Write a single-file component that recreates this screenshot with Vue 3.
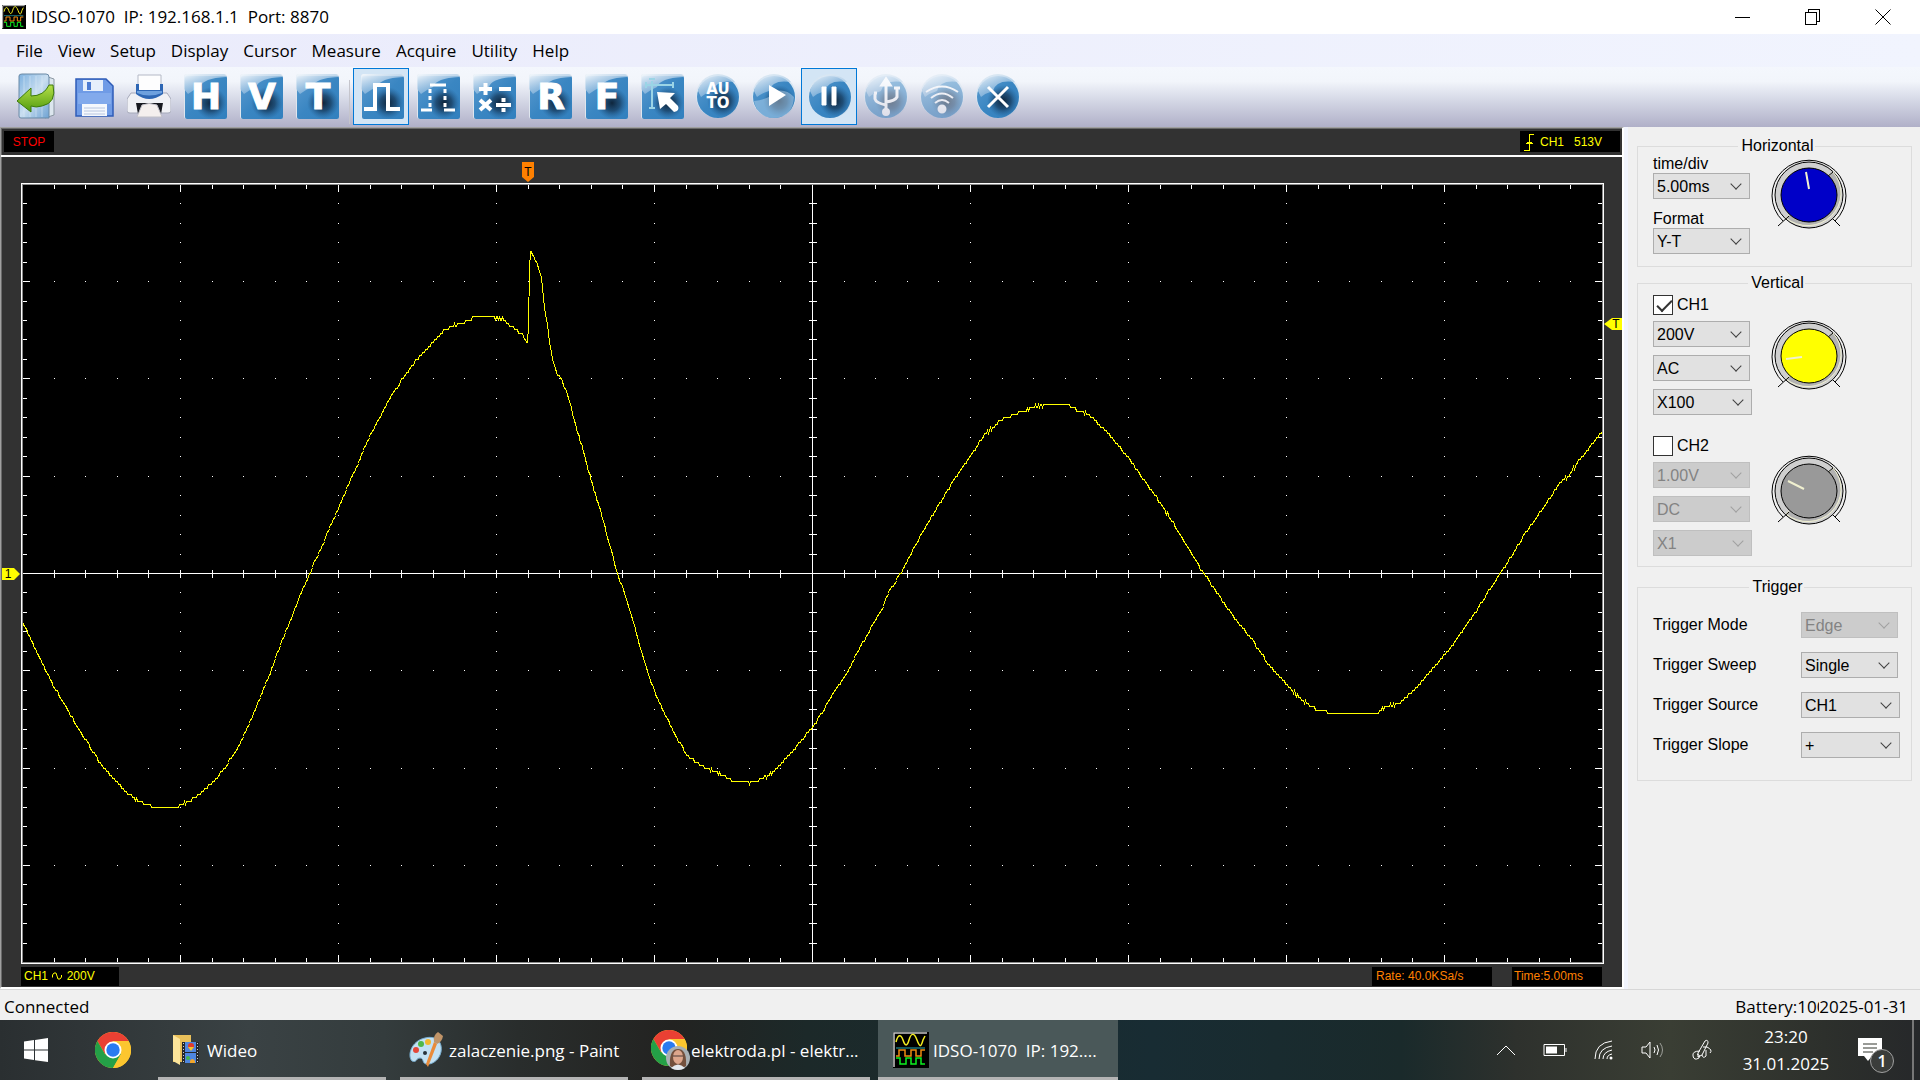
<template>
  <div class="app">
    <svg class="defs" width="0" height="0" aria-hidden="true">
      <defs>
        <linearGradient id="tileBlue" x1="0" y1="0" x2="1" y2="1">
          <stop offset="0" stop-color="#5b9bd0" />
          <stop offset="0.5" stop-color="#3a86c2" />
          <stop offset="1" stop-color="#3280be" />
        </linearGradient>
        <linearGradient id="glare" x1="0" y1="0" x2="0.7" y2="1">
          <stop offset="0" stop-color="#f4f8fc" />
          <stop offset="1" stop-color="#7fb0da" stop-opacity="0.5" />
        </linearGradient>
        <radialGradient id="shade">
          <stop offset="0" stop-color="#0c2034" stop-opacity="0.95" />
          <stop offset="0.5" stop-color="#12304e" stop-opacity="0.65" />
          <stop offset="1" stop-color="#1d5588" stop-opacity="0" />
        </radialGradient>
        <linearGradient id="book" x1="0" y1="0" x2="1" y2="1">
          <stop offset="0" stop-color="#7fb2e0" />
          <stop offset="0.5" stop-color="#c9def0" />
          <stop offset="1" stop-color="#6fa3d3" />
        </linearGradient>
        <linearGradient id="leaf" x1="0" y1="0" x2="0" y2="1">
          <stop offset="0" stop-color="#b6e04a" />
          <stop offset="1" stop-color="#4f9a0c" />
        </linearGradient>
        <symbol id="tile" viewBox="0 0 44 46">
          <rect x="1" y="1" width="43" height="45" rx="3" fill="#dfe6ee" />
          <rect x="2" y="3" width="42" height="43" rx="2" fill="url(#tileBlue)" />
          <circle cx="28" cy="30" r="16" fill="url(#shade)" />
          <path d="M1 4Q1 1 4 1H40Q43 1 43 4Q20 5 17 14Q10 17 5 21L1 16Z" fill="url(#glare)" />
        </symbol>
        <symbol id="disc" viewBox="0 0 44 46">
          <circle cx="22" cy="23" r="22" fill="#d8e6f2" />
          <circle cx="22" cy="24" r="21" fill="url(#tileBlue)" />
          <circle cx="27" cy="28" r="16" fill="url(#shade)" />
          <path d="M2 18Q6 3 22 2Q34 2 39 9Q20 6 17 18Q10 20 5 24Z" fill="url(#glare)" />
        </symbol>
        <symbol id="dial" viewBox="0 0 76 74">
          <path d="M12 62A37 35.500 0 1 1 64 62" fill="none" stroke="#000" />
          <ellipse cx="38" cy="36" rx="34" ry="33" fill="#cfcfcf" stroke="#000" />
          <path d="M62 13A33.500 32.500 0 0 1 15 59Z" fill="#b2b2b2" />
          <path d="M7 67L18 57M69 67L62 60M56 18L62 13" stroke="#000" />
          <ellipse cx="38" cy="36" rx="28" ry="27" fill="currentColor" stroke="#000" />
        </symbol>
        <symbol id="scopeIcon" viewBox="0 0 36 36">
          <rect width="36" height="36" fill="#000" />
          <path d="M1 35V1H34" fill="none" stroke="#c8c8c8" stroke-width="1.500" />
          <path d="M3 10C5 2 8 2 10 8S14 15 16 8S21 0 24 8S28 15 30 8L32 4" fill="none" stroke="#f4ee22" stroke-width="1.500" />
          <path d="M3 16H32" stroke="#19727a" stroke-width="1.500" />
          <path d="M3 24H6V18H12V24H18V18H23V24H28V18H32" fill="none" stroke="#f08a10" stroke-width="1.500" />
          <path d="M3 26H7V32H13V26H18V32H23V26H28V32H32" fill="none" stroke="#0df020" stroke-width="1.500" />
        </symbol>
        <symbol id="chrome" viewBox="0 0 36 36">
          <circle cx="18" cy="18" r="18" fill="#fbc12d" />
          <path d="M18 9H33.600A18 18 0 0 0 2.400 9L10 22Z" fill="#ea4033" />
          <path d="M2.400 9A18 18 0 0 0 18 36L26 22L18 18L10.200 22.500Z" fill="#24a047" />
          <path d="M18 36A18 18 0 0 0 33.600 9H18L26 22Z" fill="#fcc62f" />
          <circle cx="18" cy="18" r="8.500" fill="#fff" />
          <circle cx="18" cy="18" r="6.700" fill="#2a7bf0" />
        </symbol>
      </defs>
    </svg>

    <header class="titlebar">
      <svg class="app-icon" viewBox="0 0 36 36"><use href="#scopeIcon" /></svg>
      <h1>IDSO-1070&nbsp; IP: 192.168.1.1&nbsp; Port: 8870</h1>
      <div class="window-buttons">
        <button aria-label="Minimize"><svg viewBox="0 0 16 16"><path d="M0 8.500H15" /></svg></button>
        <button aria-label="Restore"><svg viewBox="0 0 16 16"><path d="M.5 3.500H11.500V15.500H.5ZM3.500 3.500V.5H14.500V12.500H11.500" /></svg></button>
        <button aria-label="Close"><svg class="smooth" viewBox="0 0 16 16"><path d="M.5 .5L15.500 15.500M15.500 .5L.5 15.500" /></svg></button>
      </div>
    </header>

    <nav class="menu">
      <button v-for="item in menu" :key="item">{{ item }}</button>
    </nav>

    <div class="toolbar">
      <template v-for="tool in tools" :key="tool.name">
        <span v-if="tool.name === 'pulse'" class="separator"></span>
        <button :class="{ active: tool.active }" :disabled="tool.disabled" :aria-label="tool.name">
          <svg viewBox="0 0 44 46">
            <use v-if="tool.shape" :href="'#' + tool.shape" width="44" height="46" />
            <text v-if="tool.letter" x="23" y="36" class="letter">{{ tool.letter }}</text>
            <g v-if="tool.name === 'exit'">
              <path d="M30 3L39 6V42L30 45Z" fill="#dce6ee" stroke="#8b97a2" />
              <path d="M4 3Q4 1 7 1H31Q34 1 34 4V45H6Q4 45 4 43Z" fill="url(#book)" stroke="#6b8aa6" />
              <path d="M9 3V44M15 3V44M21 3V44M27 3V44" stroke="#e0edf8" opacity="0.5" />
              <path d="M2 28L16 15V23Q29 23 34 12H38Q42 30 27 33Q21 35 16 33V39Z" fill="url(#leaf)" stroke="#3d7a0c" />
            </g>
            <g v-else-if="tool.name === 'save'">
              <path d="M5 6H35L42 13V43H5Z" fill="#6f9be6" stroke="#2f5cb8" stroke-width="1.500" />
              <rect x="12" y="7" width="20" height="11" fill="#e6effb" />
              <rect x="16" y="9" width="4" height="8" fill="#4c7bd2" />
              <path d="M7 20H40V31H7Z" fill="#82aaec" />
              <rect x="11" y="31" width="25" height="12" fill="#f5f8fd" />
              <path d="M13 35H34M13 38H34M13 41H34" stroke="#b8c6e0" />
            </g>
            <g v-else-if="tool.name === 'print'">
              <path d="M4 20H40L44 26V38Q44 40 41 40H3Q0 40 0 38V26Z" fill="#f0f1f5" stroke="#a6a9ba" />
              <path d="M11 20V2H34V20Z" fill="#fdfdfe" stroke="#b4b9c6" />
              <path d="M9 11H12V17H33V11H36V21Q22 31 9 21Z" fill="#2d66b4" />
              <path d="M10 18H35V20Q22 25 10 20Z" fill="#6da0de" />
              <path d="M9 30H36L34 41H11Z" fill="#17191f" />
              <path d="M15 32Q22 29 30 32L35 44H10Z" fill="#f4efee" stroke="#c0bfc8" />
            </g>
            <path v-else-if="tool.name === 'pulse'" class="line" d="M4 36H15V12H28V36H40" />
            <g v-else-if="tool.name === 'dash'" class="line thin">
              <path d="M14 12H30M5 37H16M28 37H39" />
              <path d="M14 16V36M29 16V36" stroke-dasharray="4 3" />
            </g>
            <g v-else-if="tool.name === 'math'" class="line">
              <path d="M7 16H20M13.500 10V22M27 16H39M8 27L19 37M19 27L8 37M24 32H39" />
              <path d="M31.500 25V29M31.500 35V39" />
            </g>
            <g v-else-if="tool.name === 'pointer'">
              <path d="M6 12H32M12 8V34M6 9V15M33 9V15M9 35H15M9 6H15" fill="none" stroke="#9bd4e6" stroke-width="2" />
              <path d="M17 19L35 20L30 25L38 33Q40 38 34 39L26 31L20 36Z" fill="#fff" />
            </g>
            <g v-else-if="tool.name === 'auto'" class="small">
              <text x="22" y="21">AU</text>
              <text x="22" y="35">TO</text>
            </g>
            <g v-else-if="tool.name === 'run'">
              <path d="M2 28Q18 26 25 18Q34 16 42 24Q41 44 22 45Q5 44 2 28Z" fill="#b9d6ee" opacity="0.5" />
              <path d="M17 12L34 22L17 33Z" fill="#fff" />
            </g>
            <path v-else-if="tool.name === 'pause'" d="M14 14H18V32H14ZM24 14H28V32H24Z" fill="#fff" stroke="#fff" />
            <g v-else-if="tool.name === 'usb'" class="line thin">
              <path d="M22 8V40M11 21V26Q12 30 22 32M33 16V24Q31 28 22 29" />
              <path d="M22 6L18 12H26ZM30 15H36M10 20H13" />
              <circle cx="22" cy="39" r="2.500" />
            </g>
            <g v-else-if="tool.name === 'wifi'" class="line fine">
              <path d="M6 19Q22 8 38 19M11 25Q22 16 33 25M15 30Q22 24 29 30" />
              <circle cx="22" cy="36" r="3.500" fill="#fff" />
            </g>
            <path v-else-if="tool.name === 'close'" class="line thin" d="M12 14L32 34M32 14L12 34" />
          </svg>
        </button>
      </template>
    </div>

    <main class="workspace">
      <section class="scope">
        <div class="scope-bar">
          <span class="stop">STOP</span>
          <span class="trigger-info">
            <svg viewBox="0 0 10 18"><path d="M0 17H5.500V1.500H10M2 10.500H9M3 9.500H8M5 7.500H6" /></svg>
            CH1&nbsp;&nbsp; 513V
          </span>
        </div>

        <div class="scope-body">
          <div class="plot">
            <svg class="graticule" viewBox="0 0 1581 779" preserveAspectRatio="none">
              <path :d="gridPath" class="grid" />
              <path :d="wavePath" class="wave" />
            </svg>
            <svg class="marker top" :style="{ left: markers.position + '%' }" viewBox="0 0 12 20">
              <path d="M0 0H12V15L6 20L0 15Z" fill="#ff8000" />
              <text x="6" y="14" font-size="12" text-anchor="middle">T</text>
            </svg>
            <svg class="marker left" :style="{ top: markers.ground + '%' }" viewBox="0 0 18 12">
              <path d="M0 0H12L18 6L12 12H0Z" fill="#ff0" />
              <text x="6" y="10" font-size="12" text-anchor="middle">1</text>
            </svg>
            <svg class="marker right" :style="{ top: markers.level + '%' }" viewBox="0 0 18 12">
              <path d="M18 0H8L0 6L8 12H18Z" fill="#ff0" />
              <text x="12" y="10" font-size="12" text-anchor="middle">T</text>
            </svg>
          </div>
          <footer class="scope-labels">
            <span class="channel-label">CH1
              <svg viewBox="0 0 10 8"><path d="M.5 5.500V3L2 1L4 1L5 4L6 7H8L9.500 5V3" /></svg>
              200V</span>
            <span class="rate">Rate: 40.0KSa/s</span>
            <span class="time">Time:5.00ms</span>
          </footer>
        </div>
      </section>

      <aside class="side">
        <fieldset class="horizontal">
          <legend>Horizontal</legend>
          <div class="controls">
            <label for="timediv">time/div</label>
            <span class="select"><select id="timediv"><option>5.00ms</option></select></span>
            <label for="format" class="second">Format</label>
            <span class="select"><select id="format"><option>Y-T</option></select></span>
          </div>
          <svg class="dial blue" viewBox="0 0 76 74">
            <use href="#dial" width="76" height="74" />
            <path d="M35 13L38 30" />
          </svg>
        </fieldset>

        <fieldset class="vertical">
          <legend>Vertical</legend>
          <div v-for="ch in channels" :key="ch.name" class="channel" :class="{ off: !ch.on }">
            <div class="controls">
              <label class="check"><input v-model="ch.on" type="checkbox">{{ ch.name }}</label>
              <span v-for="(value, i) in ch.values" :key="i" class="select" :class="{ wide: i === 2 }">
                <select :disabled="!ch.on" :aria-label="ch.name + ' ' + fields[i]"><option>{{ value }}</option></select>
              </span>
            </div>
            <svg class="dial" :class="ch.color" viewBox="0 0 76 74">
              <use href="#dial" width="76" height="74" />
              <path :d="ch.needle" />
            </svg>
          </div>
        </fieldset>

        <fieldset class="trigger">
          <legend>Trigger</legend>
          <div v-for="(row, i) in triggerRows" :key="row.label" class="trigger-row">
            <label :for="'trigger' + i">{{ row.label }}</label>
            <span class="select" :class="{ wide: i > 1 }">
              <select :id="'trigger' + i" :disabled="row.disabled"><option>{{ row.value }}</option></select>
            </span>
          </div>
        </fieldset>
      </aside>
    </main>

    <div class="status">
      <span class="connected">Connected</span>
      <span class="battery">Battery:100%</span>
      <span class="date">2025-01-31</span>
    </div>

    <footer class="taskbar">
      <button class="start" aria-label="Start">
        <svg viewBox="0 0 24 24"><path d="M0 3.500L10 2V11.500H0ZM11 1.900L24 0V11.500H11ZM0 12.500H10V22L0 20.500ZM11 12.500H24V24L11 22.200Z" fill="#fff" /></svg>
      </button>
      <button class="pinned" aria-label="Google Chrome">
        <svg viewBox="0 0 36 36"><use href="#chrome" /></svg>
      </button>
      <button class="task wideo">
        <svg viewBox="0 0 36 36">
          <path d="M6 3H24V30H6Z" fill="#e9c05a" />
          <path d="M6 3L13 7V33L6 29Z" fill="#fce49a" />
          <rect x="15" y="10" width="17" height="21" fill="#26282c" />
          <rect x="18" y="10" width="11" height="10" fill="#4f86e0" />
          <rect x="18" y="21" width="11" height="10" fill="#4f86e0" />
          <circle cx="24" cy="14" r="3" fill="#e23a2c" />
          <path d="M21 15H27L24 19Z" fill="#f2c62c" />
          <circle cx="21" cy="26" r="2" fill="#46b649" />
          <path d="M23 29Q25 25 28 29V31H23Z" fill="#f2a62c" />
          <path d="M16.500 11V31M30.500 11V31" stroke="#c8ccd4" stroke-dasharray="1 2" />
        </svg>
        Wideo
      </button>
      <button class="task paint">
        <svg viewBox="0 0 36 36">
          <path d="M16 6C27 3 34 10 32 20C30 29 22 33 17 32C13 31 15 26 11 26C7 26 8 31 3 29C-2 24 2 9 16 6Z" fill="#c3e1f3" stroke="#78aed0" />
          <circle cx="7" cy="18" r="3" fill="#e4483a" />
          <circle cx="12" cy="12" r="3" fill="#50b848" />
          <circle cx="19" cy="10" r="3" fill="#f2b82e" />
          <circle cx="16" cy="21" r="2" fill="#27333c" />
          <path d="M28 12L19 35L17 32L25 10Z" fill="#e98b3a" />
          <path d="M25 10Q24 3 29 0L34 4Q33 10 28 12Z" fill="#c09468" />
        </svg>
        zalaczenie.png - Paint
      </button>
      <button class="task browser">
        <svg viewBox="0 0 40 40">
          <use href="#chrome" width="36" height="36" />
          <circle cx="27" cy="28" r="12" fill="#a8b0b4" />
          <path d="M19 36Q18 19 27 19Q36 19 35 36Q27 42 19 36Z" fill="#73503d" />
          <ellipse cx="27" cy="27" rx="5" ry="7" fill="#dda68c" />
          <path d="M22 26H32" stroke="#4a3b38" />
          <path d="M20 38Q27 31 34 38Q27 42 20 38Z" fill="#e4e9ee" />
        </svg>
        elektroda.pl - elektr...
      </button>
      <button class="task current">
        <svg viewBox="0 0 36 36"><use href="#scopeIcon" /></svg>
        IDSO-1070&nbsp; IP: 192....
      </button>

      <div class="tray">
        <button aria-label="Show hidden icons"><svg viewBox="0 0 24 24"><path d="M3 17L12 8L21 17" /></svg></button>
        <button aria-label="Battery"><svg viewBox="0 0 24 24"><path d="M1 6.500H21.500V17.500H1ZM23 10V14" /><path d="M3 8.500H14V15.500H3Z" fill="#fff" stroke="none" /></svg></button>
        <button aria-label="Network"><svg viewBox="0 0 24 24"><path d="M3 21Q3 5 20 3M7 21Q7 10 20 8M11 21Q11 14 20 12M15 21Q15 17 20 16" /><circle cx="19" cy="20" r="1.500" fill="#fff" stroke="none" /></svg></button>
        <button aria-label="Volume"><svg viewBox="0 0 24 24"><path d="M1 9H5L9 4V20L5 15H1ZM13 9Q15 12 13 15M16 7Q19 12 16 17" /><path d="M19 5Q24 12 19 19" opacity="0.5" /></svg></button>
        <button aria-label="Pen"><svg viewBox="0 0 24 24"><path d="M8 15L15 3Q18 1 18 5L12 17L8 19ZM13 9H17Q23 12 20 15M10 13Q2 13 3 18T9 20Q11 17 7 16M12 17Q13 21 16 18V12" /></svg></button>
      </div>
      <div class="clock">
        <time>23:20</time>
        <time>31.01.2025</time>
      </div>
      <button class="notifications" aria-label="Notifications">
        <svg viewBox="0 0 26 24"><path d="M0 0H24V18H14L10 23L6 18H0Z" fill="#fff" /><path d="M5 6H19M5 10H19M5 14H15" stroke="#33362f" /></svg>
        <span class="badge">1</span>
      </button>
      <span class="show-desktop"></span>
    </footer>
  </div>
</template>

<script setup>
import { reactive, computed } from 'vue';

const menu = ['File', 'View', 'Setup', 'Display', 'Cursor', 'Measure', 'Acquire', 'Utility', 'Help'];

const tools = [
  { name: 'exit' },
  { name: 'save' },
  { name: 'print' },
  { name: 'horizontal', shape: 'tile', letter: 'H' },
  { name: 'vertical', shape: 'tile', letter: 'V' },
  { name: 'trigger', shape: 'tile', letter: 'T' },
  { name: 'pulse', shape: 'tile', active: true },
  { name: 'dash', shape: 'tile' },
  { name: 'math', shape: 'tile' },
  { name: 'reference', shape: 'tile', letter: 'R' },
  { name: 'fft', shape: 'tile', letter: 'F' },
  { name: 'pointer', shape: 'tile' },
  { name: 'auto', shape: 'disc' },
  { name: 'run', shape: 'disc' },
  { name: 'pause', shape: 'disc', active: true },
  { name: 'usb', shape: 'disc', disabled: true },
  { name: 'wifi', shape: 'disc', disabled: true },
  { name: 'close', shape: 'disc' }
];

const fields = ['volts/div', 'coupling', 'probe'];

const channels = reactive([
  { name: 'CH1', on: true, values: ['200V', 'AC', 'X100'], color: 'yellow', needle: 'M15 39L31 37' },
  { name: 'CH2', on: false, values: ['1.00V', 'DC', 'X1'], color: 'gray', needle: 'M17 26L33 34' }
]);

const triggerRows = [
  { label: 'Trigger Mode', value: 'Edge', disabled: true },
  { label: 'Trigger Sweep', value: 'Single' },
  { label: 'Trigger Source', value: 'CH1' },
  { label: 'Trigger Slope', value: '+' }
];

// percent of the plot size
const markers = { position: 32, ground: 50, level: 18 };

// measured points of the CH1 trace, in plot units
const points = [
  [0, 434], [1, 440], [5, 448], [18, 476], [31, 501], [44, 524], [58, 548], [68, 563], [81, 584], [95, 599],
  [108, 612], [123, 620], [131, 623], [156, 623], [158, 620], [173, 614], [186, 602], [200, 587], [213, 568],
  [223, 548], [236, 518], [248, 488], [258, 461], [268, 436], [278, 411], [288, 388], [301, 358], [316, 324],
  [345, 257], [368, 213], [392, 178], [418, 150], [428, 143], [441, 138], [451, 134], [466, 133], [480, 135],
  [488, 142], [500, 150], [505, 159], [506, 142], [507, 83], [508, 69], [510, 69], [515, 81], [519, 94],
  [522, 123], [525, 139], [527, 157], [530, 175], [534, 188], [539, 196], [545, 210], [553, 241], [560, 264],
  [568, 294], [578, 326], [585, 353], [595, 389], [603, 412], [610, 435], [618, 464], [625, 487], [632, 507],
  [641, 526], [651, 548], [666, 573], [680, 582], [698, 590], [711, 597], [728, 599], [736, 596], [748, 590],
  [758, 581], [771, 566], [790, 543], [803, 523], [813, 506], [825, 488], [838, 463], [846, 448], [858, 428],
  [866, 409], [878, 389], [888, 371], [901, 346], [916, 321], [933, 293], [948, 272], [958, 256], [976, 237],
  [995, 229], [1011, 223], [1025, 221], [1045, 220], [1055, 227], [1065, 229], [1075, 239], [1091, 255],
  [1106, 274], [1123, 298], [1138, 319], [1155, 346], [1168, 368], [1181, 389], [1195, 409], [1211, 433],
  [1232, 459], [1245, 479], [1265, 501], [1278, 515], [1293, 525], [1311, 529], [1356, 529], [1358, 525],
  [1375, 520], [1391, 507], [1408, 486], [1423, 471], [1438, 449], [1451, 431], [1465, 409], [1478, 389],
  [1491, 369], [1503, 349], [1518, 328], [1536, 301], [1548, 289], [1560, 272], [1570, 259], [1580, 248]
];

// height of one ADC code, the trace is drawn in steps of it
const CODE = 3.25;

const wavePath = computed(() => {
  let d = '';
  let k = 0;
  for (let x = 0; x <= 1580; x++) {
    while (k < points.length - 2 && points[k + 1][0] < x) k++;
    const [x0, y0] = points[k];
    const [x1, y1] = points[k + 1];
    const noise = Math.sin(x * 2.3) * Math.sin(x * 0.07);
    const y = y0 + (y1 - y0) * (x - x0) / (x1 - x0) + noise;
    const code = 389.5 + Math.round(Math.round((y - 389.5) / CODE) * CODE);
    d += (x ? 'L' : 'M') + (x + 0.5) + ' ' + code;
  }
  return d;
});

const gridPath = computed(() => {
  const w = 1581;
  const h = 779;
  const cx = 790.5;
  const cy = 389.5;
  let d = `M0 ${cy}H${w}M${cx} 0V${h}`;
  for (let i = 1; i < 50; i++) {
    const x = cx + Math.round((i - 25) * 31.6);
    const len = i % 5 === 0 ? 8 : 5;
    d += `M${x} 0V${len}M${x} ${h}V${h - len}M${x} ${cy - 4}V${cy + 4.5}`;
    for (let j = 1; j < 8; j++) {
      const y = cy + Math.round((j - 4) * 97.3);
      d += `M${x - 0.5} ${y}h1`;
    }
  }
  for (let i = 1; i < 40; i++) {
    const y = cy + Math.round((i - 20) * 19.46);
    const len = i % 5 === 0 ? 8 : 5;
    d += `M0 ${y}H${len}M${w} ${y}H${w - len}M${cx - 4} ${y}H${cx + 4.5}`;
    for (let j = 1; j < 10; j++) {
      const x = cx + Math.round((j - 5) * 158);
      d += `M${x - 0.5} ${y}h1`;
    }
  }
  return d;
});
</script>

<style>
body {
  margin: 0;
}
</style>

<style scoped>
* {
  box-sizing: border-box;
}

.app {
  display: flex;
  flex-direction: column;
  min-height: 100vh;
  background: #f0f0f0;
  color: #000;
  font-family: "Open Sans", "Noto Sans", sans-serif;
  font-size: 17px;
}

.defs {
  position: absolute;
}

button {
  display: flex;
  align-items: center;
  justify-content: center;
  padding: 0;
  border: none;
  background: none;
  color: inherit;
  font: inherit;
}

.titlebar {
  display: flex;
  align-items: center;
  height: 34px;
  padding: 0 2px;
  background: #fff;
}

.app-icon {
  width: 24px;
  height: 24px;
  margin-right: 5px;
}

.titlebar h1 {
  flex: 1;
  margin: 0;
  font-size: 17px;
  font-weight: 400;
  line-height: 34px;
}

.window-buttons {
  display: flex;
}

.window-buttons button {
  width: 70px;
  height: 34px;
}

.window-buttons svg {
  width: 16px;
  height: 16px;
  fill: none;
  stroke: #000;
  shape-rendering: crispEdges;
}

.window-buttons .smooth {
  shape-rendering: auto;
}

.menu {
  display: flex;
  gap: 15px;
  height: 33px;
  padding: 0 16px;
  background: linear-gradient(90deg, #eaebfb, #f1f4fe);
}

.toolbar {
  display: flex;
  align-items: flex-start;
  height: 60px;
  padding: 1px 8px;
  background: linear-gradient(#f4f7fd, #f2f5fb 24%, #d5d8e6 55%, #b0b0c8);
}

.toolbar button {
  width: 56px;
  height: 57px;
  padding: 0 0 2px 2px;
  border: 1px solid transparent;
}

.toolbar button.active {
  border-color: #0078d7;
  background: #d3e5f5;
}

.toolbar button:disabled svg {
  opacity: 0.5;
}

.toolbar svg {
  width: 44px;
  height: 46px;
}

.separator {
  width: 1px;
  height: 44px;
  margin: 12px 3px 0 5px;
  background: #c5c5cc;
}

.letter,
.small text {
  fill: #fff;
  font-family: "DejaVu Sans", sans-serif;
  font-size: 36px;
  font-weight: 700;
  text-anchor: middle;
}

.letter {
  stroke: #fff;
}

.small text {
  font-size: 15px;
}

.line {
  fill: none;
  stroke: #fff;
  stroke-width: 4;
}

.line.thin {
  stroke-width: 3;
}

.line.fine {
  stroke-width: 2;
}

.workspace {
  display: flex;
  flex: 1;
}

.scope {
  display: flex;
  flex: 1;
  flex-direction: column;
  border: 1px solid #a0a0a0;
  border-right: 2px solid #fff;
  border-bottom: 2px solid #fff;
  background: #323232;
  box-shadow: inset 1px 1px #696969;
  font-family: "Liberation Sans", Arial, sans-serif;
  font-size: 12px;
}

.scope-bar {
  display: flex;
  justify-content: space-between;
  padding: 3px 2px 3px 3px;
  border-bottom: 2px solid #fff;
}

.scope-bar span {
  height: 21px;
  background: #000;
  line-height: 22px;
}

.scope-bar .stop {
  width: 50px;
  color: #f00;
  text-align: center;
}

.scope-bar .trigger-info {
  display: flex;
  align-items: center;
  gap: 6px;
  width: 100px;
  padding-left: 4px;
  color: #ff0;
}

.trigger-info svg {
  width: 10px;
  height: 18px;
  fill: none;
  stroke: #ff0;
  shape-rendering: crispEdges;
}

.scope-body {
  display: flex;
  flex: 1;
  flex-direction: column;
  padding: 26px 18px 1px 20px;
}

.plot {
  position: relative;
  display: flex;
  flex: 1;
  border: 1px solid #fff;
  background: #000;
}

.graticule {
  width: 100%;
  height: 100%;
  outline: 1px solid #8c8c8c;
  outline-offset: -1px;
  shape-rendering: crispEdges;
}

.grid {
  fill: none;
  stroke: #fff;
}

.wave {
  fill: none;
  stroke: #ff0;
}

.marker {
  position: absolute;
}

.marker.top {
  width: 12px;
  height: 20px;
  bottom: 100%;
  margin-bottom: 2px;
  transform: translateX(-50%);
}

.marker.left,
.marker.right {
  width: 18px;
  height: 12px;
  transform: translateY(-50%);
}

.marker.left {
  right: 100%;
  margin-right: 2px;
}

.marker.right {
  left: 100%;
  margin-left: 1px;
}

.scope-labels {
  display: flex;
  height: 22px;
  padding-top: 3px;
  color: #ff8000;
  line-height: 19px;
}

.scope-labels span {
  padding-left: 4px;
  background: #000;
}

.scope-labels .channel-label {
  width: 98px;
  margin-right: auto;
  padding-left: 3px;
  color: #ff0;
}

.channel-label svg {
  width: 10px;
  height: 8px;
  margin: 0 1px;
  fill: none;
  stroke: #ff0;
}

.scope-labels .rate {
  width: 120px;
  margin-right: 20px;
}

.scope-labels .time {
  width: 90px;
  padding-left: 2px;
  margin-right: 2px;
}

.side {
  width: 296px;
  padding: 10px 8px 9px 9px;
  border-left: 4px solid #f1f4fd;
  font-family: "Liberation Sans", Arial, sans-serif;
  font-size: 16px;
}

fieldset {
  min-width: 0;
  margin: 0;
  padding: 0 11px 0 15px;
  border: 1px solid #dcdcdc;
}

legend {
  margin: 0 auto;
  padding: 0 1px 0 3px;
  line-height: 18px;
}

.horizontal {
  display: flex;
  gap: 19px;
  margin-bottom: 7px;
  padding-bottom: 12px;
}

.controls {
  display: flex;
  flex-direction: column;
  width: 99px;
}

.controls label {
  line-height: 18px;
}

.controls .second {
  margin-top: 11px;
}

.select {
  position: relative;
  width: 97px;
  height: 26px;
}

.select.wide {
  width: 99px;
}

.select::after {
  position: absolute;
  top: 7px;
  right: 10px;
  width: 7px;
  height: 7px;
  border: solid #404040;
  border-width: 0 1px 1px 0;
  content: "";
  pointer-events: none;
  transform: rotate(45deg);
}

.select:has(:disabled)::after {
  border-color: #a0a0a0;
}

select {
  width: 100%;
  height: 100%;
  padding: 0 3px;
  border: 1px solid #adadad;
  border-radius: 0;
  appearance: none;
  background: #e1e1e1;
  color: #000;
  font: inherit;
}

select:disabled {
  border-color: #bfbfbf;
  background: #ccc;
  color: #838383;
  opacity: 1;
}

.dial {
  width: 76px;
  height: 74px;
  margin-top: 4px;
  fill: none;
  stroke: #f0f0d0;
  stroke-width: 2;
}

.dial use {
  stroke-width: 1;
}

.blue {
  color: #0000c8;
}

.yellow {
  color: #ff0;
}

.gray {
  color: #999;
}

.vertical {
  margin-bottom: 11px;
  padding-top: 3px;
  padding-bottom: 10px;
}

.channel {
  display: flex;
  gap: 19px;
}

.channel + .channel {
  margin-top: 21px;
}

.channel .controls {
  gap: 8px;
}

.channel .dial {
  margin-top: 25px;
}

.channel.off .dial {
  margin-top: 19px;
}

.controls .check {
  display: flex;
  align-items: center;
  gap: 4px;
  height: 20px;
  margin-bottom: -2px;
}

.check input {
  width: 20px;
  height: 20px;
  margin: 0;
  border: 1px solid #333;
  appearance: none;
  background: #fff;
}

.check input:checked::before {
  display: block;
  width: 13px;
  height: 6px;
  margin: 4px 3px;
  border: solid #333;
  border-width: 0 0 2px 2px;
  content: "";
  transform: rotate(-45deg);
}

.trigger {
  display: flex;
  flex-direction: column;
  gap: 14px;
  padding-top: 16px;
  padding-bottom: 22px;
}

.trigger-row {
  display: grid;
  grid-template-columns: 148px 99px;
  align-items: center;
}

.status {
  display: flex;
  align-items: center;
  height: 31px;
  padding: 2px 12px 0 4px;
  border-top: 1px solid #d7d7d7;
  background: #f0f0f0;
}

.connected {
  flex: 1;
}

.battery {
  width: 84px;
  overflow: hidden;
  white-space: nowrap;
}

.taskbar {
  display: flex;
  align-items: stretch;
  height: 60px;
  background: linear-gradient(90deg, #2a2f31, #3a4244 13%, #343c3d 20%, #292d2c 27%, #232321 35%, #1c2929 42%, #182c33 60%, #1a2a2b 73%, #2e312d 79%, #3a3e34 87%, #2d302c 95%, #26282a);
  color: #fff;
}

.start {
  width: 72px;
}

.start svg {
  width: 24px;
  height: 24px;
}

.pinned {
  width: 82px;
  margin-right: 4px;
}

.pinned svg {
  width: 36px;
  height: 36px;
}

.task {
  justify-content: flex-start;
  gap: 4px;
  width: 228px;
  margin-right: 14px;
  padding-left: 9px;
  border-bottom: 3px solid #b4b4b4;
  border-top: 3px solid transparent;
  white-space: nowrap;
}

.task svg {
  flex: none;
  width: 36px;
  height: 36px;
}

.task.browser {
  gap: 0;
  margin-right: 8px;
}

.task.browser svg {
  width: 40px;
  height: 40px;
}

.task.current {
  width: 240px;
  padding-left: 15px;
  border-top: 0;
  padding-top: 3px;
  background: #4a5859;
}

.tray {
  display: flex;
  gap: 25px;
  margin-left: auto;
}

.tray svg {
  width: 24px;
  height: 24px;
  fill: none;
  stroke: #fff;
}

.clock {
  display: flex;
  flex-direction: column;
  justify-content: center;
  width: 88px;
  margin: 0 28px;
  line-height: 27px;
  text-align: center;
}

.notifications {
  position: relative;
  width: 38px;
}

.notifications svg {
  width: 26px;
  height: 24px;
  margin-right: 12px;
}

.badge {
  position: absolute;
  right: 2px;
  bottom: 7px;
  width: 24px;
  height: 24px;
  border: 1px solid #a0a0a0;
  border-radius: 50%;
  background: #3b3d3b;
  font-size: 16px;
  font-weight: 600;
  line-height: 22px;
}

.show-desktop {
  width: 8px;
  margin-left: 16px;
  border-left: 2px solid #777;
}
</style>
